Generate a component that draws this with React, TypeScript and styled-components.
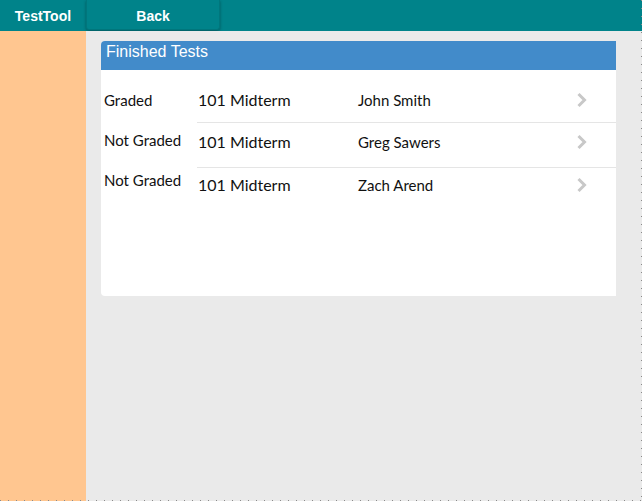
import styled, { createGlobalStyle } from 'styled-components';

const GlobalStyle = createGlobalStyle`
  html, body {
    margin: 0;
    padding: 0;
  }
  body {
    font-family: Lato, 'Open Sans', sans-serif;
  }
`;

const results = [
  { status: 'Graded', test: '101 Midterm', student: 'John Smith', pad: 12 },
  { status: 'Not Graded', test: '101 Midterm', student: 'Greg Sawers', pad: 9 },
  { status: 'Not Graded', test: '101 Midterm', student: 'Zach Arend', pad: 7 },
];

function Chevron() {
  return (
    <svg width='12' height='16' viewBox='0 0 12 16'>
      <path d='M2.5 2 L8.5 8 L2.5 14' fill='none' stroke='#c8c8c8' strokeWidth='3' />
    </svg>
  );
}

export default function App() {
  return (
    <Page>
      <GlobalStyle />
      <TopBar>
        <Brand>TestTool</Brand>
        <BackButton>Back</BackButton>
      </TopBar>
      <Body>
        <Sidebar />
        <Main>
          <Card>
            <CardHeader>Finished Tests</CardHeader>
            <CardBody>
              <StatusColumn>
                {results.map((r, idx) => (
                  <Status key={idx}>{r.status}</Status>
                ))}
              </StatusColumn>
              <List>
                {results.map((r, idx) => (
                  <Row key={idx} $first={idx === 0} $pad={r.pad}>
                    <TestName>{r.test}</TestName>
                    <Student>{r.student}</Student>
                    <Arrow>
                      <Chevron />
                    </Arrow>
                  </Row>
                ))}
              </List>
            </CardBody>
          </Card>
        </Main>
      </Body>
    </Page>
  );
}

const Page = styled.div`
  width: 642px;
  height: 501px;
  display: flex;
  flex-direction: column;
  position: relative;
  overflow: hidden;

  &::after {
    content: '';
    position: absolute;
    inset: 0;
    pointer-events: none;
    background:
      repeating-linear-gradient(to bottom, #8a8a8a 0 1px, transparent 1px 8px) right top / 1px 100% no-repeat,
      repeating-linear-gradient(to right, #8a8a8a 0 1px, transparent 1px 8px) left bottom / 100% 1px no-repeat;
  }
`;

const TopBar = styled.div`
  height: 31px;
  background-color: #00838a;
  display: flex;
  align-items: flex-start;
  flex-shrink: 0;
`;

const Brand = styled.div`
  width: 86px;
  height: 31px;
  line-height: 32px;
  text-align: center;
  color: #fff;
  font-family: 'Liberation Sans', Arial, sans-serif;
  font-weight: bold;
  font-size: 14px;
`;

const BackButton = styled.button`
  width: 134px;
  height: 30px;
  margin: 0;
  padding: 0;
  background-color: #00838a;
  border: 1px solid #00767c;
  border-top: none;
  border-radius: 0 0 3px 3px;
  box-shadow: 0 1px 3px rgba(0, 0, 0, 0.35);
  color: #fff;
  font-family: 'Liberation Sans', Arial, sans-serif;
  font-weight: bold;
  font-size: 14px;
  line-height: 33px;
`;

const Body = styled.div`
  flex: 1;
  display: flex;
`;

const Sidebar = styled.div`
  width: 86px;
  background-color: #ffc690;
`;

const Main = styled.div`
  flex: 1;
  background-color: #eaeaea;
  padding: 10px 0 0 15px;
`;

const Card = styled.div`
  width: 515px;
  height: 255px;
  background-color: #fff;
  border-radius: 4px 0 0 4px;
  overflow: hidden;
  display: flex;
  flex-direction: column;
`;

const CardHeader = styled.div`
  height: 29px;
  background-color: #428bca;
  color: #fff;
  font-family: 'Liberation Sans', Arial, sans-serif;
  font-size: 16px;
  line-height: 21px;
  padding: 0 0 0 5px;
`;

const CardBody = styled.div`
  display: flex;
  padding-top: 8px;
`;

const StatusColumn = styled.div`
  width: 93px;
  padding: 12px 0 0 3px;
  display: flex;
  flex-direction: column;
  gap: 20px;
`;

const Status = styled.div`
  font-size: 15px;
  line-height: 20px;
  color: #111;
`;

const List = styled.div`
  flex: 1;
  display: flex;
  flex-direction: column;
`;

const Row = styled.div<{ $first?: boolean; $pad: number }>`
  box-sizing: border-box;
  display: flex;
  align-items: flex-start;
  line-height: 20px;
  padding-top: ${(p) => p.$pad}px;
  border-top: ${(p) => (p.$first ? 'none' : '1px solid #e5e5e5')};
  height: ${(p) => (p.$first ? 44 : 45)}px;
`;

const TestName = styled.div`
  width: 160px;
  padding-left: 1px;
  font-size: 16px;
  color: #111;
`;

const Student = styled.div`
  flex: 1;
  font-size: 15px;
  color: #111;
`;

const Arrow = styled.div`
  width: 40px;
  height: 20px;
  display: flex;
  align-items: center;
`;
